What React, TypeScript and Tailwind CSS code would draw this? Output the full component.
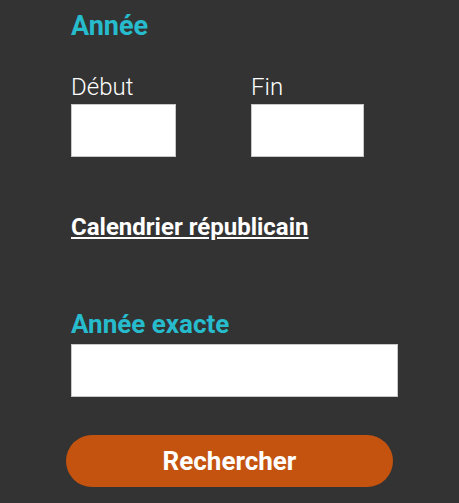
import React from 'react';

export default function App() {
  return (
    <div className="min-h-[503px] w-full bg-[#333333] font-['Roboto',sans-serif] pl-[71px] pt-[10px]">
      <h2 className="text-[27px] font-bold leading-[32px] text-[#26bccd]">Année</h2>

      <div className="mt-[32px] flex gap-[75px]">
        <div className="flex flex-col">
          <label className="text-[24px] font-light leading-[26px] text-white">Début</label>
          <input type="text" className="mt-[4px] h-[53px] w-[105px] border border-[#c8c8c8] bg-white" />
        </div>
        <div className="flex flex-col">
          <label className="text-[24px] font-light leading-[26px] text-white">Fin</label>
          <input type="text" className="mt-[4px] h-[53px] w-[113px] border border-[#c8c8c8] bg-white" />
        </div>
      </div>

      <a href="#" className="mt-[56px] block w-fit text-[24px] font-bold leading-[28px] text-white underline underline-offset-[2px]">
        Calendrier républicain
      </a>

      <h2 className="mt-[68px] text-[26px] font-bold leading-[30px] text-[#26bccd]">Année exacte</h2>
      <input type="text" className="mt-[5px] block h-[53px] w-[327px] border border-[#c8c8c8] bg-white" />

      <button className="-ml-[5px] mt-[38px] h-[52px] w-[327px] rounded-full bg-[#c4530f] text-[26px] font-bold text-white">
        Rechercher
      </button>
    </div>
  );
}
